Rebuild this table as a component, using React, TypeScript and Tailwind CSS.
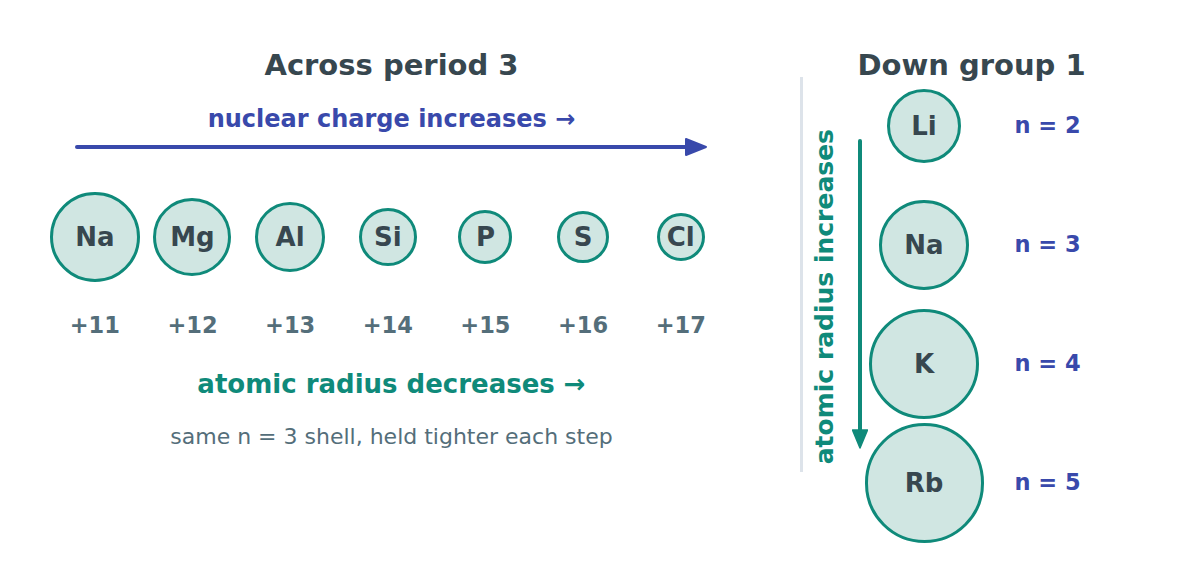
const period = [
  { sym: "Na", r: 44, z: "+11" },
  { sym: "Mg", r: 38, z: "+12" },
  { sym: "Al", r: 34, z: "+13" },
  { sym: "Si", r: 28, z: "+14" },
  { sym: "P", r: 26, z: "+15" },
  { sym: "S", r: 25, z: "+16" },
  { sym: "Cl", r: 23, z: "+17" },
];

const group = [
  { sym: "Li", r: 36, n: 2 },
  { sym: "Na", r: 44, n: 3 },
  { sym: "K", r: 54, n: 4 },
  { sym: "Rb", r: 59, n: 5 },
];

function Atom({ sym, r }: { sym: string; r: number }) {
  return (
    <div
      className="rounded-full bg-[#d0e6e2] border-[3px] border-[#0f8a7a] flex items-center justify-center text-[26px] font-bold text-[#37474f]"
      style={{ width: r * 2 + 2, height: r * 2 + 2 }}
    >
      {sym}
    </div>
  );
}

export default function App() {
  return (
    <div className="w-[1198px] h-[582px] bg-white flex font-['DejaVu_Sans',sans-serif] overflow-hidden">
      {/* Across period */}
      <div className="w-[783px] flex flex-col items-center pt-[47px]">
        <h2 className="text-[29px] leading-[36px] font-bold text-[#37474f]">Across period 3</h2>
        <div className="mt-[21px] text-[24px] leading-[30px] font-bold text-[#3949ab]">nuclear charge increases →</div>
        <svg width="640" height="20" viewBox="0 0 640 20" className="mt-[3px] self-start ml-[74px]">
          <line x1="3" y1="10" x2="616" y2="10" stroke="#3949ab" strokeWidth="4" strokeLinecap="round" />
          <path d="M612 2 L632 10 L612 18 Z" fill="#3949ab" stroke="#3949ab" strokeWidth="2" strokeLinejoin="round" />
        </svg>
        <div className="self-start ml-[46px] mt-[35px] flex">
          {period.map((a) => (
            <div key={a.sym} className="w-[97.67px] flex flex-col items-center">
              <div className="h-[90px] flex items-center">
                <Atom sym={a.sym} r={a.r} />
              </div>
              <div className="mt-[30px] text-[22.5px] leading-[26px] font-bold text-[#546e7a]">{a.z}</div>
            </div>
          ))}
        </div>
        <div className="mt-[30px] text-[26px] leading-[32px] font-bold text-[#0f8a7a]">atomic radius decreases →</div>
        <div className="mt-[23px] text-[22px] leading-[28px] text-[#546e7a]">same n = 3 shell, held tighter each step</div>
      </div>

      {/* Down group */}
      <div className="flex items-start">
        <div className="w-[3px] h-[395px] mt-[77px] ml-[17px] bg-[#dde3ea]" />
        <div className="ml-[9px] mt-[129px] h-[336px] w-[26px] flex items-center justify-center">
          <span className="[writing-mode:vertical-rl] rotate-180 text-[25px] leading-[26px] font-bold text-[#0f8a7a] whitespace-nowrap">
            atomic radius increases
          </span>
        </div>
        <svg width="16" height="314" viewBox="0 0 16 314" className="mt-[138px] ml-[14px]">
          <line x1="8" y1="3" x2="8" y2="296" stroke="#0f8a7a" strokeWidth="4" strokeLinecap="round" />
          <path d="M0.5 292 L8 310 L15.5 292 Z" fill="#0f8a7a" stroke="#0f8a7a" strokeWidth="1.5" strokeLinejoin="round" />
        </svg>
        <div className="ml-[-3.5px] flex flex-col items-start pt-[47px]">
          <h2 className="text-[29px] leading-[36px] font-bold text-[#37474f] text-center whitespace-nowrap mb-[-16.5px] w-[240px] ml-[-13px]">
            Down group 1
          </h2>
          {group.map((a) => (
            <div key={a.sym} className="h-[119px] flex items-center">
              <div className="w-[119px] flex justify-center">
                <Atom sym={a.sym} r={a.r} />
              </div>
              <div className="ml-[31px] text-[22.5px] font-bold text-[#3949ab] whitespace-nowrap">n = {a.n}</div>
            </div>
          ))}
        </div>
      </div>
    </div>
  );
}
